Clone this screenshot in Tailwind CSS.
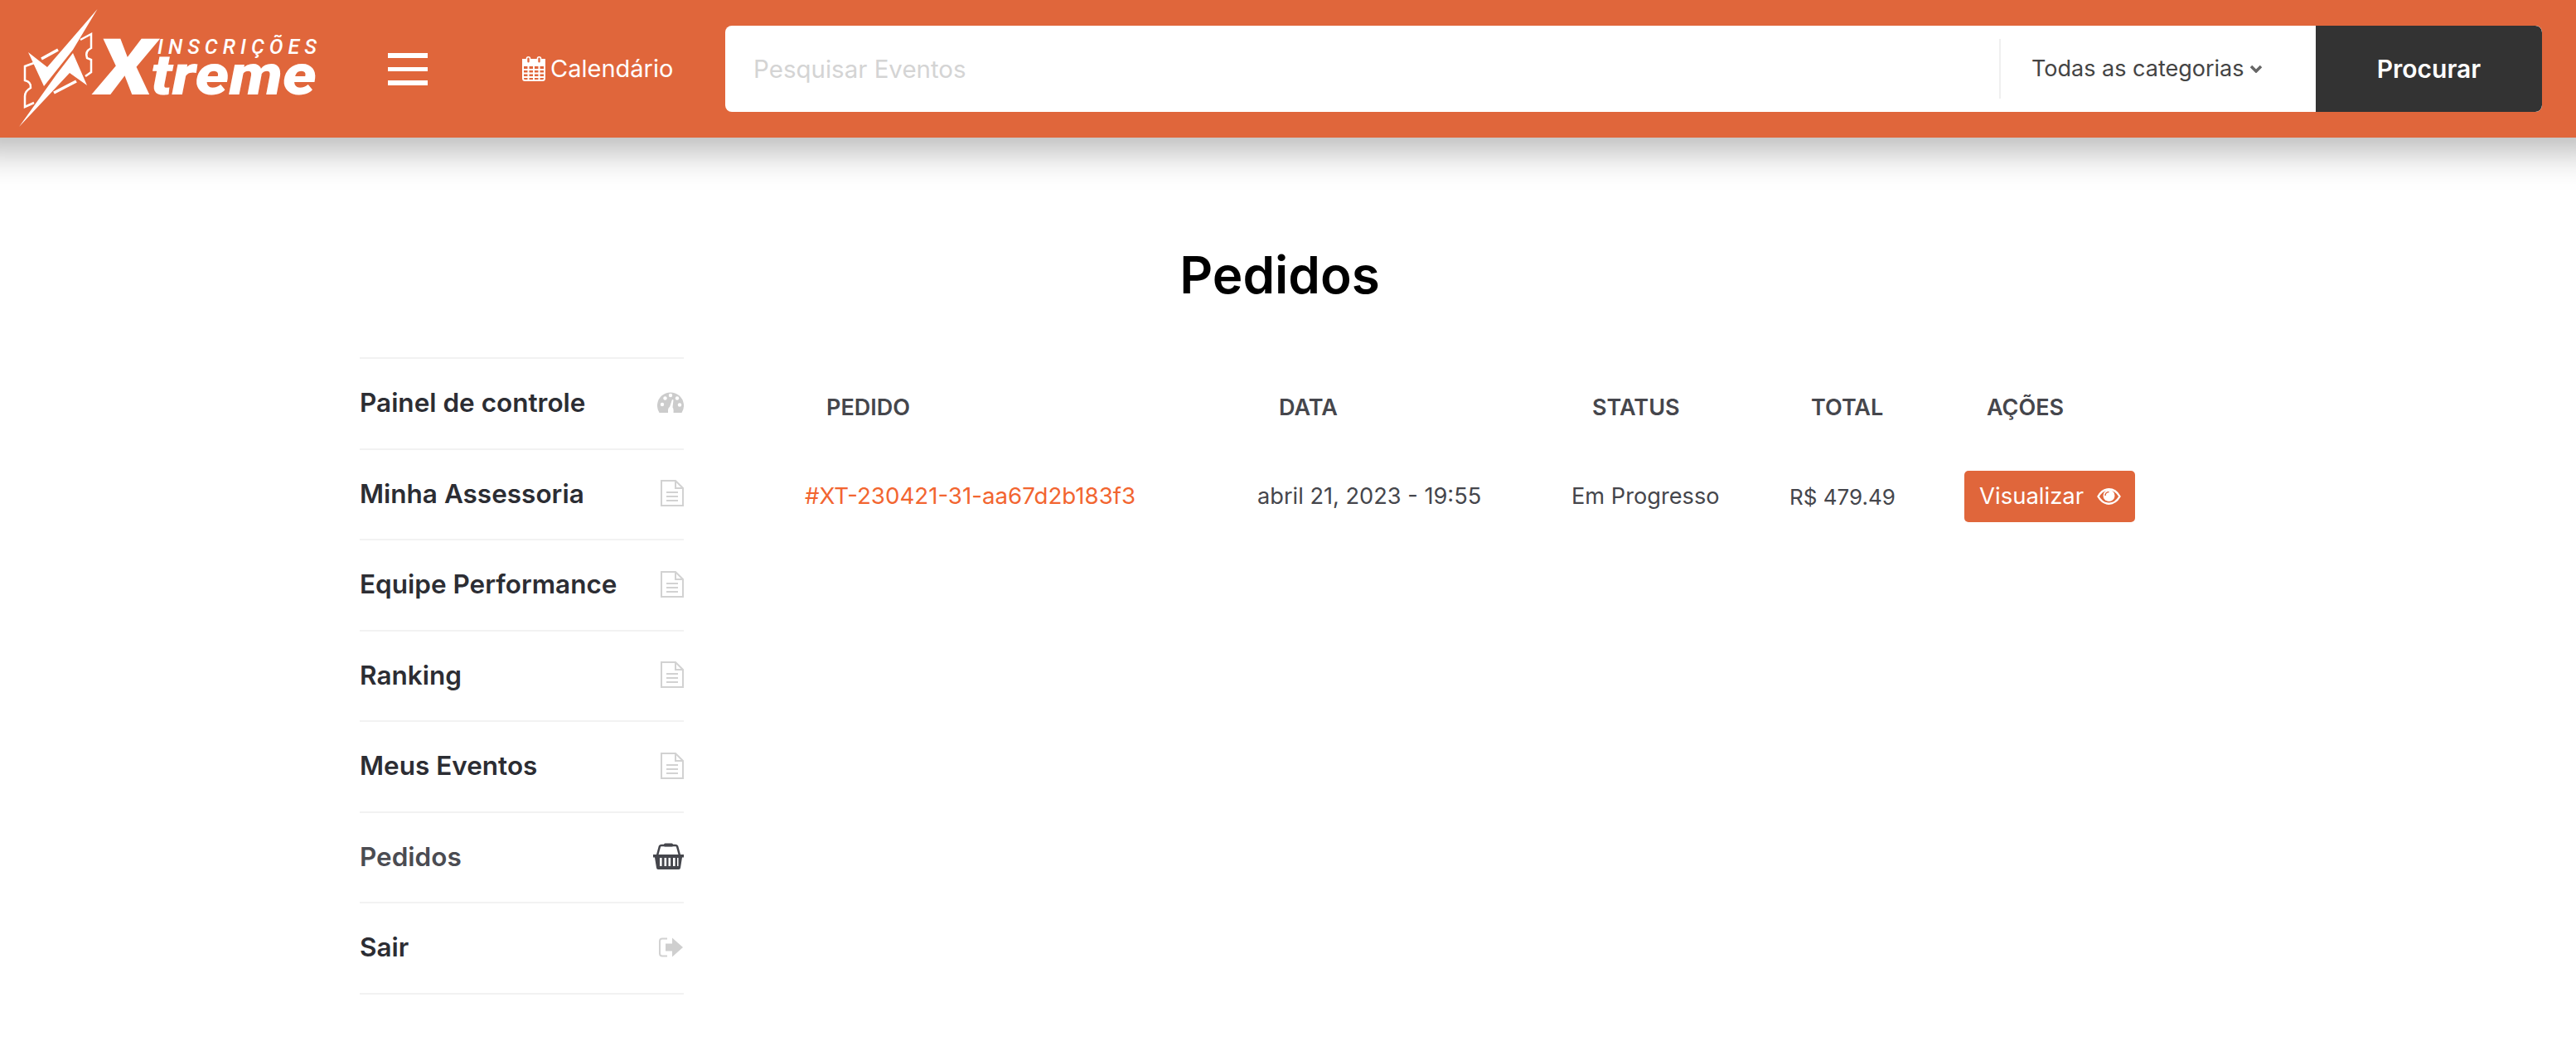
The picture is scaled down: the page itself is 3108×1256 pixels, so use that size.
<!DOCTYPE html>
<html lang="pt-BR">
<head>
<meta charset="utf-8">
<script src="https://cdn.jsdelivr.net/npm/@tailwindcss/browser@4"></script>
<title>Pedidos</title>
</head>
<body class="bg-white font-['Inter',sans-serif] overflow-hidden h-[1256px]">
<header class="relative z-10 h-[166px] bg-[#e0663b] flex items-center shadow-[0_-23px_40px_40px_rgba(0,0,0,0.28)]">
  <svg class="ml-[22px] w-[372px] h-[166px] shrink-0" viewBox="22 0 372 166" fill="#fff">
    <polygon points="34,63 57,81 117.5,11 88,60 53,104"/>
    <polygon points="88,64 105,103 84,88 23,153 68,90"/>
    <g fill="none" stroke="#fff" stroke-width="2.5">
      <path d="M41,76 L30,80 L30,97 Q38,99 37,106 Q30,110 30,116 L30,129 L41,124"/>
      <path d="M97,48 L110,41 L110,58 Q102,62 105,70 L110,72 L110,87 L103,92"/>
    </g>
    <g stroke="#fff" stroke-width="3.5"><path d="M50,71 L70,60"/><path d="M65,112 L92,98"/></g>
    <text x="116" y="114" font-family="Roboto" font-weight="900" font-style="italic" font-size="94" textLength="70" lengthAdjust="spacingAndGlyphs">X</text>
    <text x="182" y="114" font-family="Roboto" font-weight="900" font-style="italic" font-size="68" textLength="200" lengthAdjust="spacingAndGlyphs">treme</text>
    <text x="190" y="65" font-family="Roboto" font-weight="500" font-style="italic" font-size="25" textLength="192">INSCRIÇÕES</text>
  </svg>
  <div class="ml-[74px] w-[48px] flex flex-col gap-[11px] shrink-0">
    <span class="h-[6px] bg-white"></span><span class="h-[5px] bg-white"></span><span class="h-[6px] bg-white"></span>
  </div>
  <div class="ml-[114px] w-[245px] flex items-center text-white text-[29px] shrink-0">
    <svg class="w-[28px] h-[30px] mr-[6px] shrink-0" viewBox="0 0 28 30" fill="none" stroke="#fff" stroke-width="2">
      <rect x="1" y="4" width="26" height="25" rx="2.5"/>
      <rect x="1" y="4" width="26" height="7" fill="#fff"/>
      <path d="M1,16 H27 M1,20.500 H27 M1,25 H27 M7.500,11 V29 M14,11 V29 M20.500,11 V29"/>
      <rect x="5.500" y="0.800" width="4" height="7.500" rx="2" fill="#e0663b" stroke-width="1.600"/><rect x="18.500" y="0.800" width="4" height="7.500" rx="2" fill="#e0663b" stroke-width="1.600"/>
    </svg>
    <span>Calendário</span>
  </div>
  <div class="w-[2192px] h-[104px] bg-white rounded-[8px] flex items-center overflow-hidden shrink-0">
    <input class="flex-1 min-w-0 h-full pl-[34px] text-[29.5px] outline-none placeholder:text-[#d4d4d4]" placeholder="Pesquisar Eventos">
    <div class="w-[2px] h-[72px] bg-[#efefef]"></div>
    <div class="w-[380px] pl-[37px] flex items-center text-[27px] text-[#444]">
      <span>Todas as categorias</span>
      <svg class="ml-[6px] w-[16px] h-[10px]" viewBox="0 0 16 10" fill="none" stroke="#666" stroke-width="3.500"><path d="M2,2 L8,8 L14,2"/></svg>
    </div>
    <button class="w-[273px] h-full bg-[#333] text-white text-[30px] font-semibold rounded-r-[8px]">Procurar</button>
  </div>
</header>

<main>
  <h1 class="mt-[126px] h-[80px] text-center text-[62px] leading-[80px] font-semibold text-black pr-[20px]">Pedidos</h1>
  <div class="mt-[59px] pl-[434px] flex items-start">
    <nav class="w-[391px] shrink-0 border-t-2 border-[#f2f2f2] text-[#2c2d33] text-[31.500px] font-semibold">
      <a class="h-[109.5px] pb-[2px] border-b-2 border-[#f2f2f2] flex items-center justify-between">
        <span>Painel de controle</span>
        <svg class="w-[32px] h-[25px]" viewBox="0 0 32 25"><path fill="#ccc" d="M2.500,25 A16,16 0 1 1 29.500,25 Z"/><g fill="#fff"><circle cx="6" cy="15" r="2.200"/><circle cx="9.500" cy="7.500" r="2.200"/><circle cx="16" cy="4" r="2.200"/><circle cx="24" cy="7.500" r="2.200"/><circle cx="27" cy="15.500" r="2.200"/><path d="M13,25 Q12.500,19 15,18 L18,9 L19.500,9.500 L18.500,18.500 Q20,20 19.500,25 Z"/></g></svg>
      </a>
      <a class="h-[109.5px] pb-[2px] border-b-2 border-[#f2f2f2] flex items-center justify-between">
        <span>Minha Assessoria</span>
        <svg class="w-[28px] h-[32px]" viewBox="0 0 28 32" fill="none" stroke="#d2d2d2" stroke-width="2"><path d="M1,1 H18 L27,10 V31 H1 Z M18,1 V10 H27"/><path d="M7,15 H21 M7,20 H21 M7,25 H21"/></svg>
      </a>
      <a class="h-[109.5px] pb-[2px] border-b-2 border-[#f2f2f2] flex items-center justify-between">
        <span>Equipe Performance</span>
        <svg class="w-[28px] h-[32px]" viewBox="0 0 28 32" fill="none" stroke="#d2d2d2" stroke-width="2"><path d="M1,1 H18 L27,10 V31 H1 Z M18,1 V10 H27"/><path d="M7,15 H21 M7,20 H21 M7,25 H21"/></svg>
      </a>
      <a class="h-[109.5px] pb-[2px] border-b-2 border-[#f2f2f2] flex items-center justify-between">
        <span>Ranking</span>
        <svg class="w-[28px] h-[32px]" viewBox="0 0 28 32" fill="none" stroke="#d2d2d2" stroke-width="2"><path d="M1,1 H18 L27,10 V31 H1 Z M18,1 V10 H27"/><path d="M7,15 H21 M7,20 H21 M7,25 H21"/></svg>
      </a>
      <a class="h-[109.5px] pb-[2px] border-b-2 border-[#f2f2f2] flex items-center justify-between">
        <span>Meus Eventos</span>
        <svg class="w-[28px] h-[32px]" viewBox="0 0 28 32" fill="none" stroke="#d2d2d2" stroke-width="2"><path d="M1,1 H18 L27,10 V31 H1 Z M18,1 V10 H27"/><path d="M7,15 H21 M7,20 H21 M7,25 H21"/></svg>
      </a>
      <a class="h-[109.5px] pb-[2px] border-b-2 border-[#f2f2f2] flex items-center justify-between text-[#4b4c52]">
        <span>Pedidos</span>
        <svg class="w-[37px] h-[32px]" viewBox="0 0 37 32"><path fill="none" stroke="#45464c" stroke-width="2.500" d="M5,15 L8,4 Q8.500,3 10,3 H27 Q28.500,3 29,4 L32,15"/><rect x="13" y="0.500" width="11" height="4" rx="1.500" fill="#45464c"/><path fill="#45464c" d="M0,14 H37 V17.500 H35 L33,30 Q32.800,32 31,32 H6 Q4.200,32 4,30 L2,17.500 H0 Z"/><g fill="#fff"><rect x="8" y="18" width="2.600" height="10"/><rect x="13.500" y="18" width="2.600" height="10"/><rect x="18.500" y="18" width="2.600" height="10"/><rect x="24" y="18" width="2.600" height="10"/><rect x="29" y="18" width="1.500" height="10"/></g></svg>
      </a>
      <a class="h-[109.5px] pb-[2px] border-b-2 border-[#f2f2f2] flex items-center justify-between">
        <span>Sair</span>
        <svg class="w-[29px] h-[24px] mr-[1px]" viewBox="0 0 29 24"><path fill="none" stroke="#d2d2d2" stroke-width="2" d="M10,1.500 H4 Q1,1.500 1,4.500 V19.500 Q1,22.500 4,22.500 H10"/><path fill="#cfcfcf" d="M8,7.500 H16 V0.500 L29,12 L16,23.500 V16.500 H8 Z"/></svg>
      </a>
    </nav>
    <section class="ml-[146px] mt-[2px] text-[27.200px] text-[#45464c]">
      <div class="grid grid-cols-[546px_379px_263px_211px_206px] h-[119px] items-center font-semibold text-[27px]">
        <span class="pl-[26px]">PEDIDO</span><span class="pl-[26px]">DATA</span><span class="pl-[25px]">STATUS</span><span class="pl-[26px]">TOTAL</span><span class="pl-[27px]">AÇÕES</span>
      </div>
      <div class="grid grid-cols-[546px_379px_263px_211px_206px] h-[94px] items-center">
        <a class="text-[#f26530] text-[27.700px]">#XT-230421-31-aa67d2b183f3</a>
        <span>abril 21, 2023 - 19:55</span>
        <span>Em Progresso</span>
        <span class="text-[26px]">R$ 479.49</span>
        <a class="h-[62px] bg-[#e0663b] rounded-[5px] text-white flex items-center pl-[18px] gap-[16px]">
          <span class="text-[27.500px]">Visualizar</span>
          <svg class="w-[29px] h-[20px]" viewBox="0 0 29 20"><path fill="none" stroke="#fff" stroke-width="2.400" d="M1.500,10 C5,4 9,1.300 14.500,1.300 C20,1.300 24,4 27.500,10 C24,16 20,18.700 14.500,18.700 C9,18.700 5,16 1.500,10 Z"/><circle cx="14.500" cy="9" r="7" fill="#fff"/><path fill="none" stroke="#e0663b" stroke-width="1.500" d="M10,9 C10,6.500 12,4.500 14.500,4.500"/></svg>
        </a>
      </div>
    </section>
  </div>
</main>
</body>
</html>
